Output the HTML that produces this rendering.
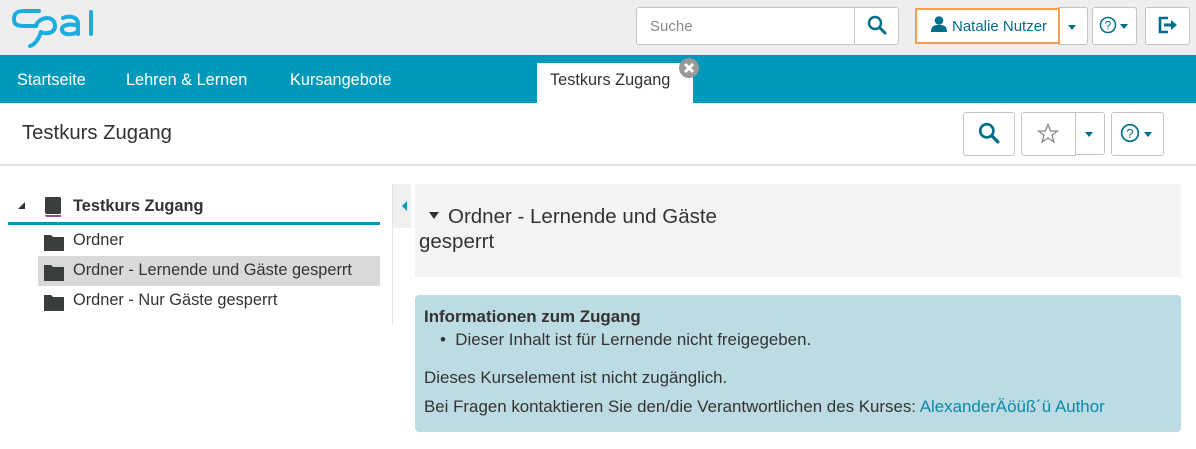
<!DOCTYPE html>
<html><head><meta charset="utf-8"><style>
*{box-sizing:border-box;margin:0;padding:0}
body{width:1196px;height:449px;overflow:hidden;background:#fff;font-family:"Liberation Sans",Arial,sans-serif;color:#333;position:relative}
.abs{position:absolute}
.top{left:0;top:0;width:1196px;height:55px;background:#eeeeee}
.nav{left:0;top:55px;width:1196px;height:48px;background:#0099bb}
.nav span{position:absolute;top:16px;color:#fff;font-size:16.3px}
.btn{position:absolute;border:1px solid #c4c4c4;border-radius:3px;background:#fff}
.caret{display:inline-block;width:0;height:0;border-left:4.5px solid transparent;border-right:4.5px solid transparent;border-top:5px solid #006e8c}
.side{font-size:16.35px}
.ct{font-size:16.9px}
</style></head><body>
<div class="abs top"></div>
<svg class="abs" style="left:10px;top:4px" width="92" height="46" viewBox="0 0 92 46" fill="none" stroke="#19ade0" stroke-width="4" stroke-linecap="round">
<path d="M29 7 H14 C6 7 4 10 4 15 C4 20 6 22 14 22 H26"/>
<path d="M26 22 C28 13 45 10 45 22 C45 30 35 30 31 28"/>
<path d="M31 28 C29 34 26 40 20 42"/>
<path d="M53 14 C60 11 68 13 68 20 V30 M68 22 C60 19 51 21 52 26 C53 32 64 31 68 27"/>
<path d="M81 8 V30"/>
</svg>
<div class="btn" style="left:636px;top:7px;width:220px;height:38px;border-radius:3px 0 0 3px"></div>
<span class="abs" style="left:650px;top:18px;font-size:15px;color:#888">Suche</span>
<div class="btn" style="left:854px;top:7px;width:45px;height:38px;border-radius:0 3px 3px 0"></div>
<svg class="abs" style="left:867px;top:15px" width="20" height="20" viewBox="0 0 20 20"><circle cx="8" cy="8" r="6" fill="none" stroke="#006e8c" stroke-width="2.4"/><path d="M12.5 12.5L18 18" stroke="#006e8c" stroke-width="3" stroke-linecap="round"/></svg>
<div class="btn" style="left:1058px;top:7px;width:30px;height:38px;border-radius:0 3px 3px 0"></div>
<span class="caret abs" style="left:1068px;top:25px"></span>
<div class="abs" style="left:915px;top:8px;width:145px;height:36px;border:2px solid #f0a050;background:#fff"></div>
<svg class="abs" style="left:930px;top:16px" width="18" height="16" viewBox="0 0 18 16"><circle cx="9" cy="4.5" r="4.3" fill="#006e8c"/><path d="M1 16 C1 10 4 9 9 9 C14 9 17 10 17 16Z" fill="#006e8c"/></svg>
<span class="abs" style="left:952px;top:18px;font-size:15px;color:#006e8c">Natalie Nutzer</span>
<div class="btn" style="left:1092px;top:7px;width:45px;height:38px"></div>
<svg class="abs" style="left:1099px;top:16px" width="18" height="18" viewBox="0 0 18 18"><circle cx="9" cy="9" r="7.5" fill="none" stroke="#006e8c" stroke-width="1.5"/><text x="9" y="13.5" font-size="12" text-anchor="middle" fill="#006e8c" font-family="Liberation Sans">?</text></svg>
<span class="caret abs" style="left:1120px;top:24px"></span>
<div class="btn" style="left:1145px;top:7px;width:45px;height:38px"></div>
<svg class="abs" style="left:1158px;top:16px" width="20" height="18" viewBox="0 0 20 18"><path d="M10 2H2V16H10" fill="none" stroke="#006e8c" stroke-width="2.6"/><path d="M6 9H14" stroke="#006e8c" stroke-width="3"/><path d="M13 4L19 9L13 14Z" fill="#006e8c"/></svg>
<div class="abs nav"><span style="left:17px">Startseite</span><span style="left:126px">Lehren &amp; Lernen</span><span style="left:290px">Kursangebote</span></div>
<div class="abs" style="left:537px;top:63px;width:156px;height:40px;background:#fff"></div>
<span class="abs" style="left:550px;top:71px;font-size:16.3px;color:#333">Testkurs Zugang</span>
<svg class="abs" style="left:678px;top:57px" width="22" height="22" viewBox="0 0 22 22"><circle cx="11" cy="11" r="10" fill="#999"/><path d="M7 7L15 15M15 7L7 15" stroke="#fff" stroke-width="3"/></svg>
<span class="abs" style="left:22px;top:122px;font-size:20.3px;color:#333">Testkurs Zugang</span>
<div class="btn" style="left:963px;top:112px;width:52px;height:44px"></div>
<svg class="abs" style="left:978px;top:122px" width="22" height="22" viewBox="0 0 20 20"><circle cx="8" cy="8" r="6" fill="none" stroke="#006e8c" stroke-width="2.4"/><path d="M12.5 12.5L18 18" stroke="#006e8c" stroke-width="3" stroke-linecap="round"/></svg>
<div class="btn" style="left:1021px;top:112px;width:55px;height:44px;border-radius:3px 0 0 3px"></div>
<svg class="abs" style="left:1037px;top:123px" width="22" height="21" viewBox="0 0 22 21"><path d="M11 1.5L13.6 8H20.5L15 12.2L17 19L11 15L5 19L7 12.2L1.5 8H8.4Z" fill="none" stroke="#888" stroke-width="1.3"/></svg>
<div class="btn" style="left:1075px;top:112px;width:30px;height:43px;border-radius:0 3px 3px 0"></div>
<span class="caret abs" style="left:1085px;top:132px"></span>
<div class="btn" style="left:1111px;top:112px;width:53px;height:44px"></div>
<svg class="abs" style="left:1120px;top:123px" width="20" height="20" viewBox="0 0 18 18"><circle cx="9" cy="9" r="7.5" fill="none" stroke="#006e8c" stroke-width="1.5"/><text x="9" y="13.5" font-size="12" text-anchor="middle" fill="#006e8c" font-family="Liberation Sans">?</text></svg>
<span class="caret abs" style="left:1144px;top:132px"></span>
<div class="abs" style="left:0;top:164px;width:1196px;height:2px;background:#e0e0e0"></div>
<div class="abs" style="left:18px;top:202px;width:0;height:0;border-left:7px solid transparent;border-bottom:7px solid #333"></div>
<svg class="abs" style="left:44px;top:196px" width="20" height="22" viewBox="0 0 20 22"><rect x="1" y="1" width="16" height="17" rx="1.5" fill="#3a3d3e"/><path d="M1 19H17V21H3C2 21 1 20.5 1 19Z" fill="#7a5a8a"/></svg>
<span class="abs side" style="left:73px;top:197px;font-weight:bold;color:#333">Testkurs Zugang</span>
<div class="abs" style="left:8px;top:222px;width:372px;height:3px;background:#0099bb"></div>
<div class="abs" style="left:38px;top:256px;width:342px;height:30px;background:#d9d9d9"></div>
<div class="abs" style="left:392px;top:184px;width:1px;height:140px;background:#e4e4e4"></div>
<div class="abs" style="left:393px;top:184px;width:18px;height:44px;background:#f0f0f0"></div>
<div class="abs" style="left:402px;top:201px;width:0;height:0;border-top:5px solid transparent;border-bottom:5px solid transparent;border-right:5px solid #0099bb"></div>
<svg class="abs" style="left:44px;top:235px" width="20" height="16"><path d="M0 0H7L9 2H20V16H0Z" fill="#3a3d3e"/></svg>
<span class="abs side" style="left:73px;top:231px;color:#333">Ordner</span>
<svg class="abs" style="left:44px;top:265px" width="20" height="16"><path d="M0 0H7L9 2H20V16H0Z" fill="#3a3d3e"/></svg>
<span class="abs side" style="left:73px;top:261px;color:#333">Ordner - Lernende und Gäste gesperrt</span>
<svg class="abs" style="left:44px;top:295px" width="20" height="16"><path d="M0 0H7L9 2H20V16H0Z" fill="#3a3d3e"/></svg>
<span class="abs side" style="left:73px;top:291px;color:#333">Ordner - Nur Gäste gesperrt</span>
<div class="abs" style="left:415px;top:184px;width:766px;height:93px;background:#f4f4f4"></div>
<div class="abs" style="left:429px;top:212px;width:0;height:0;border-left:5px solid transparent;border-right:5px solid transparent;border-top:7px solid #333"></div>
<span class="abs" style="left:448px;top:205px;font-size:20.5px;color:#333">Ordner - Lernende und Gäste</span>
<span class="abs" style="left:419px;top:230px;font-size:20.5px;color:#333">gesperrt</span>
<div class="abs" style="left:415px;top:295px;width:766px;height:137px;background:#bcdbe2;border-radius:4px"></div>
<span class="abs ct" style="left:424px;top:307px;font-weight:bold;color:#333">Informationen zum Zugang</span>
<span class="abs ct" style="left:440px;top:330px;color:#333">•&nbsp; Dieser Inhalt ist für Lernende nicht freigegeben.</span>
<span class="abs ct" style="left:424px;top:368px;color:#333">Dieses Kurselement ist nicht zugänglich.</span>
<span class="abs ct" style="left:424px;top:397px;color:#333">Bei Fragen kontaktieren Sie den/die Verantwortlichen des Kurses: <span style="color:#0a8aa8">AlexanderÄöüß´ü Author</span></span>
</body></html>
